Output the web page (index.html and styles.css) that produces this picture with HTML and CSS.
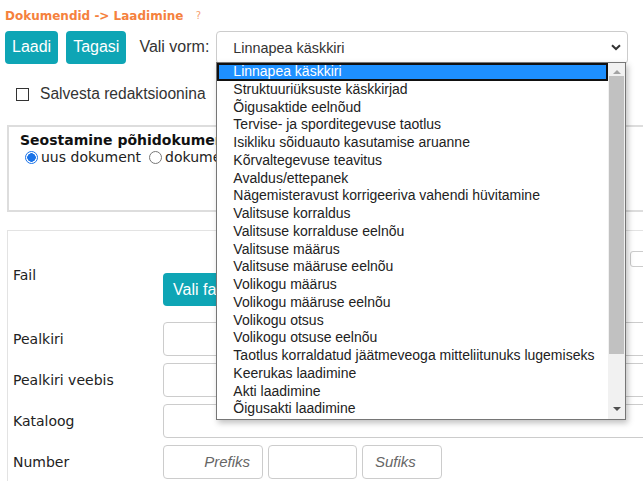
FILE: index.html
```html
<!DOCTYPE html>
<html lang="et">

<head>
    <meta charset="UTF-8">
    <meta name="viewport" content="width=device-width, initial-scale=1.0">
    <title>Dokumendid -> Laadimine</title>
    <link rel="stylesheet" href="styles.css">
</head>

<body>
    <div class="page">
        <h1 class="crumbs">Dokumendid -&gt; Laadimine <span class="help">?</span></h1>

        <div class="toolbar">
            <button class="btn">Laadi</button>
            <button class="btn">Tagasi</button>
            <label class="form-label">Vali vorm:</label>
            <div class="select-wrap">
                <div class="select">
                    <span>Linnapea käskkiri</span>
                    <svg class="chevron" width="10" height="7" viewBox="0 0 10 7">
                        <path d="M1 1.2 L5 5 L9 1.2" fill="none" stroke="#333" stroke-width="2"/>
                    </svg>
                </div>

                <!-- avatud valikute nimekiri -->
                <div class="popup">
                    <ul class="options">
                        <li class="selected">Linnapea käskkiri</li>
                        <li>Struktuuriüksuste käskkirjad</li>
                        <li>Õigusaktide eelnõud</li>
                        <li>Tervise- ja sporditegevuse taotlus</li>
                        <li>Isikliku sõiduauto kasutamise aruanne</li>
                        <li>Kõrvaltegevuse teavitus</li>
                        <li>Avaldus/ettepanek</li>
                        <li>Nägemisteravust korrigeeriva vahendi hüvitamine</li>
                        <li>Valitsuse korraldus</li>
                        <li>Valitsuse korralduse eelnõu</li>
                        <li>Valitsuse määrus</li>
                        <li>Valitsuse määruse eelnõu</li>
                        <li>Volikogu määrus</li>
                        <li>Volikogu määruse eelnõu</li>
                        <li>Volikogu otsus</li>
                        <li>Volikogu otsuse eelnõu</li>
                        <li>Taotlus korraldatud jäätmeveoga mitteliitunuks lugemiseks</li>
                        <li>Keerukas laadimine</li>
                        <li>Akti laadimine</li>
                        <li>Õigusakti laadimine</li>
                    </ul>
                    <div class="scrollbar">
                        <span class="arrow up"></span>
                        <div class="thumb"></div>
                        <span class="arrow down"></span>
                    </div>
                </div>
            </div>
        </div>

        <label class="check-row">
            <span class="checkbox"></span>
            Salvesta redaktsioonina
        </label>

        <div class="panel panel-link">
            <div class="panel-title">Seostamine põhidokumendiga</div>
            <div class="radios">
                <span class="radio checked"></span><span class="radio-text">uus dokument</span>
                <span class="radio"></span><span class="radio-text">dokumendi versioon</span>
            </div>
        </div>

        <div class="panel panel-form">
            <div class="top-row">
                <span class="small-box"></span>
            </div>

            <div class="row row-file">
                <div class="label">Fail</div>
                <button class="btn btn-file">Vali fail</button>
            </div>

            <div class="row">
                <div class="label">Pealkiri</div>
                <div class="input"></div>
            </div>

            <div class="row">
                <div class="label">Pealkiri veebis</div>
                <div class="input"></div>
            </div>

            <div class="row">
                <div class="label">Kataloog</div>
                <div class="input"></div>
            </div>

            <div class="row">
                <div class="label">Number</div>
                <div class="number-group">
                    <div class="input small prefix">Prefiks</div>
                    <div class="input small middle"></div>
                    <div class="input small suffix">Sufiks</div>
                </div>
            </div>
        </div>
    </div>
</body>

</html>
```

FILE: styles.css
```css
body {
    margin: 0;
    font-family: "DejaVu Sans", Verdana, sans-serif;
    color: #222;
    background-color: white;
    overflow: hidden;
}

.page {
    padding: 0 5px;
    width: 760px;
}

.crumbs {
    margin: 0;
    padding-top: 8px;
    font-size: 12px;
    font-weight: bold;
    color: #f5813d;
    line-height: 16px;
}

.help {
    font-weight: normal;
    font-size: 10px;
    color: #f7a070;
    margin-left: 8px;
    vertical-align: top;
}

.toolbar {
    display: flex;
    align-items: center;
    margin-top: 6px;
}

.btn {
    height: 33px;
    padding: 0 7px;
    background-color: #0ea5b5;
    color: white;
    border: none;
    border-radius: 4px;
    font-family: "Liberation Sans", Arial, sans-serif;
    font-size: 16px;
    cursor: pointer;
}

.btn + .btn {
    margin-left: 8px;
}

.form-label {
    margin-left: 13px;
    margin-right: 7px;
    font-family: "Liberation Sans", Arial, sans-serif;
    font-size: 16px;
    color: #333;
}

.select-wrap {
    position: relative;
}

.select {
    width: 388px;
    height: 31px;
    margin-top: 1px;
    border: 1px solid #ccc;
    border-radius: 4px;
    display: flex;
    align-items: center;
    justify-content: space-between;
    padding: 0 6px 0 16px;
    font-family: "Liberation Sans", Arial, sans-serif;
    font-size: 14.4px;
    color: #333;
}

.popup {
    position: absolute;
    left: 0;
    top: 32px;
    width: 408px;
    height: 356px;
    border: 1px solid #767676;
    background-color: white;
    box-shadow: 2px 3px 6px rgba(0, 0, 0, 0.25);
    display: flex;
    z-index: 10;
}

.options {
    list-style: none;
    margin: 0;
    padding: 0;
    flex: 1;
    font-family: "Liberation Sans", Arial, sans-serif;
    font-size: 14px;
    color: #222;
}

.options li {
    height: 17.75px;
    line-height: 17.75px;
    padding-left: 16px;
    white-space: nowrap;
}

.options li.selected {
    background-color: #1e90ff;
    color: white;
    outline: 2px solid #111;
    outline-offset: -2px;
}

.scrollbar {
    width: 17px;
    background-color: #f1f1f1;
    display: flex;
    flex-direction: column;
    align-items: center;
}

.thumb {
    width: 15px;
    height: 278px;
    background-color: #c1c1c1;
    margin-top: 2px;
}

.arrow {
    width: 0;
    height: 0;
    border-left: 4px solid transparent;
    border-right: 4px solid transparent;
}

.arrow.up {
    margin-top: 7px;
    border-bottom: 4px solid #a3a3a3;
}

.arrow.down {
    margin-top: auto;
    margin-bottom: 8px;
    border-top: 4px solid #505050;
}

.check-row {
    display: flex;
    align-items: center;
    margin-top: 21px;
    margin-left: 11px;
    font-family: "Liberation Sans", Arial, sans-serif;
    font-size: 15.6px;
    color: #333;
}

.checkbox {
    width: 11px;
    height: 11px;
    border: 1px solid #333;
    margin-right: 11px;
}

.panel {
    margin-left: 2px;
    background-color: white;
}

.panel-link {
    margin-top: 22px;
    border: 2px solid #ddd;
    padding: 5px 11px;
    box-sizing: border-box;
    height: 87px;
}

.panel-title {
    font-weight: bold;
    font-size: 14px;
    color: #111;
    line-height: 17px;
}

.radios {
    display: flex;
    align-items: center;
    margin-left: 5px;
    font-size: 14px;
    color: #222;
    line-height: 17px;
}

.radio {
    width: 11px;
    height: 11px;
    border: 1px solid #777;
    border-radius: 50%;
    margin-right: 3px;
}

.radio.checked {
    border-color: #1a73e8;
    background: radial-gradient(circle, #1a73e8 0 4px, white 4.5px);
}

.radio-text {
    margin-right: 8px;
}

.panel-form {
    margin-top: 18px;
    border: 1px solid #e3e3e3;
    padding: 0 0 0 5px;
    height: 300px;
}

.top-row {
    height: 42px;
    display: flex;
    align-items: center;
}

.small-box {
    margin-left: 617px;
    margin-top: 14px;
    width: 14px;
    height: 14px;
    border: 1px solid #ccc;
    border-radius: 3px;
}

.row {
    display: flex;
    align-items: center;
    margin-bottom: 7px;
}

.row-file {
    align-items: flex-start;
    margin-bottom: 16px;
}

.row-file .label {
    margin-top: -6px;
}

.btn-file {
    padding: 0 10px;
}

.label {
    width: 150px;
    font-size: 14px;
    color: #222;
}

.input {
    width: 500px;
    height: 32px;
    border: 1px solid #ccc;
    border-radius: 4px;
}

.number-group {
    display: flex;
    gap: 5px;
}

.input.small {
    font-family: "Liberation Sans", Arial, sans-serif;
    font-size: 15px;
    font-style: italic;
    color: #666;
    line-height: 32px;
}

.prefix {
    width: 86px;
    text-align: right;
    padding-right: 12px;
}

.middle {
    width: 87px;
}

.suffix {
    width: 66px;
    padding-left: 12px;
}
```
